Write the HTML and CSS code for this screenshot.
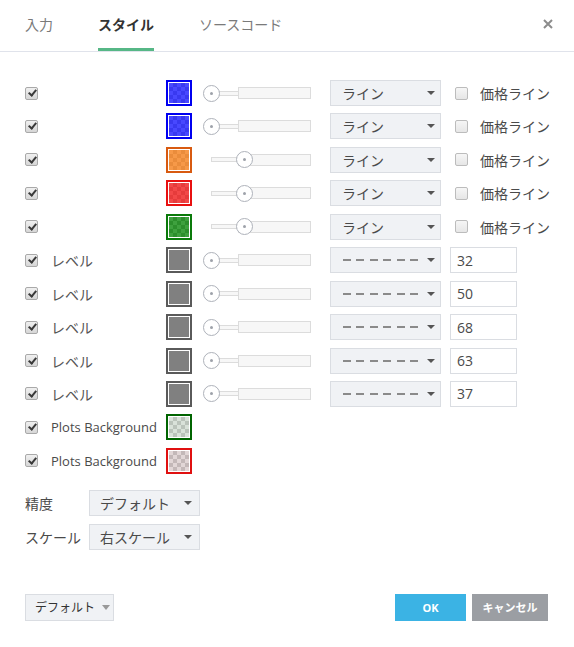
FILE: index.html
```html
<!DOCTYPE html>
<html lang="ja">
<head>
<meta charset="utf-8">
<link rel="stylesheet" href="styles.css">
</head>
<body>
<div class="dialog">
  <div class="header">
    <div class="tab">入力</div>
    <div class="tab active">スタイル</div>
    <div class="tab">ソースコード</div>
    <svg class="close" width="10" height="10" viewBox="0 0 10 10"><path d="M1 1L9 9M9 1L1 9" stroke="#8c8c8c" stroke-width="2"/></svg>
  </div>

  <div class="rows">
    <div class="row">
      <span class="cb on"></span><span class="label"></span>
      <span class="swatch sw-blue"><i></i></span>
      <span class="slider"><span class="thin"></span><span class="thick"></span><span class="thumb"></span></span>
      <span class="select"><span>ライン</span><b class="arrow"></b></span>
      <span class="cb off"></span><span class="plabel">価格ライン</span>
    </div>
    <div class="row">
      <span class="cb on"></span><span class="label"></span>
      <span class="swatch sw-blue"><i></i></span>
      <span class="slider"><span class="thin"></span><span class="thick"></span><span class="thumb"></span></span>
      <span class="select"><span>ライン</span><b class="arrow"></b></span>
      <span class="cb off"></span><span class="plabel">価格ライン</span>
    </div>
    <div class="row">
      <span class="cb on"></span><span class="label"></span>
      <span class="swatch sw-orange"><i></i></span>
      <span class="slider"><span class="thin"></span><span class="thick"></span><span class="thumb mid"></span></span>
      <span class="select"><span>ライン</span><b class="arrow"></b></span>
      <span class="cb off"></span><span class="plabel">価格ライン</span>
    </div>
    <div class="row">
      <span class="cb on"></span><span class="label"></span>
      <span class="swatch sw-red"><i></i></span>
      <span class="slider"><span class="thin"></span><span class="thick"></span><span class="thumb mid"></span></span>
      <span class="select"><span>ライン</span><b class="arrow"></b></span>
      <span class="cb off"></span><span class="plabel">価格ライン</span>
    </div>
    <div class="row">
      <span class="cb on"></span><span class="label"></span>
      <span class="swatch sw-green"><i></i></span>
      <span class="slider"><span class="thin"></span><span class="thick"></span><span class="thumb mid"></span></span>
      <span class="select"><span>ライン</span><b class="arrow"></b></span>
      <span class="cb off"></span><span class="plabel">価格ライン</span>
    </div>
    <div class="row">
      <span class="cb on"></span><span class="label jp">レベル</span>
      <span class="swatch sw-gray"><i></i></span>
      <span class="slider"><span class="thin"></span><span class="thick"></span><span class="thumb"></span></span>
      <span class="select"><span class="dashes"></span><b class="arrow"></b></span>
      <span class="num">32</span>
    </div>
    <div class="row">
      <span class="cb on"></span><span class="label jp">レベル</span>
      <span class="swatch sw-gray"><i></i></span>
      <span class="slider"><span class="thin"></span><span class="thick"></span><span class="thumb"></span></span>
      <span class="select"><span class="dashes"></span><b class="arrow"></b></span>
      <span class="num">50</span>
    </div>
    <div class="row">
      <span class="cb on"></span><span class="label jp">レベル</span>
      <span class="swatch sw-gray"><i></i></span>
      <span class="slider"><span class="thin"></span><span class="thick"></span><span class="thumb"></span></span>
      <span class="select"><span class="dashes"></span><b class="arrow"></b></span>
      <span class="num">68</span>
    </div>
    <div class="row">
      <span class="cb on"></span><span class="label jp">レベル</span>
      <span class="swatch sw-gray"><i></i></span>
      <span class="slider"><span class="thin"></span><span class="thick"></span><span class="thumb"></span></span>
      <span class="select"><span class="dashes"></span><b class="arrow"></b></span>
      <span class="num">63</span>
    </div>
    <div class="row">
      <span class="cb on"></span><span class="label jp">レベル</span>
      <span class="swatch sw-gray"><i></i></span>
      <span class="slider"><span class="thin"></span><span class="thick"></span><span class="thumb"></span></span>
      <span class="select"><span class="dashes"></span><b class="arrow"></b></span>
      <span class="num">37</span>
    </div>
    <div class="row">
      <span class="cb on"></span><span class="label">Plots Background</span>
      <span class="swatch sw-bggreen"><i></i></span>
    </div>
    <div class="row">
      <span class="cb on"></span><span class="label">Plots Background</span>
      <span class="swatch sw-bgred"><i></i></span>
    </div>
  </div>

  <div class="opts">
    <div class="opt">
      <span class="olabel">精度</span>
      <span class="select small"><span>デフォルト</span><b class="arrow"></b></span>
    </div>
    <div class="opt">
      <span class="olabel">スケール</span>
      <span class="select small"><span>右スケール</span><b class="arrow"></b></span>
    </div>
  </div>

  <div class="footer">
    <span class="btn-def">デフォルト<b class="arrow light"></b></span>
    <span class="spacer"></span>
    <span class="btn ok">OK</span>
    <span class="btn cancel">キャンセル</span>
  </div>
</div>
</body>
</html>
```

FILE: styles.css
```css
* { box-sizing: border-box; }
html, body { margin: 0; padding: 0; background: #fff; }
body {
  font-family: "Open Sans", "Noto Sans CJK JP", sans-serif;
  color: #4a4a4a;
  width: 574px;
  height: 647px;
  overflow: hidden;
}
.dialog { width: 574px; }

.header {
  display: flex;
  align-items: stretch;
  height: 52px;
  border-bottom: 1px solid #e0e3eb;
  padding-left: 25px;
}
.tab {
  display: flex;
  align-items: center;
  font-size: 14px;
  color: #7a7a7a;
  margin-right: 45px;
  border-bottom: 3px solid transparent;
}
.tab.active {
  color: #333;
  font-weight: bold;
  border-bottom-color: #56b786;
}
.close {
  margin-left: auto;
  margin-right: 21px;
  align-self: center;
  margin-top: -4px;
}

.rows {
  padding: 28px 0 0 25px;
  display: flex;
  flex-direction: column;
  gap: 7.45px;
}
.row {
  display: flex;
  align-items: center;
  height: 26px;
}
.cb {
  width: 13px;
  height: 13px;
  border-radius: 2px;
  flex: none;
  position: relative;
}
.cb.on {
  border: 1px solid #a9a9a9;
  background: linear-gradient(#f0f0f0, #d6d6d6);
}
.cb.on::after {
  content: "";
  position: absolute;
  left: 3.5px;
  top: 0.5px;
  width: 3px;
  height: 6px;
  border: solid #3a3a3a;
  border-width: 0 2.5px 2.5px 0;
  transform: rotate(40deg);
}
.cb.off {
  border: 1px solid #bcbcbc;
  background: linear-gradient(#f6f6f6, #e6e6e6);
  margin-left: 14px;
}
.label {
  width: 115px;
  margin-left: 13px;
  font-size: 13px;
  color: #4a4a4a;
  white-space: nowrap;
}
.label.jp { font-size: 14px; color: #555; }
.plabel {
  margin-left: 12px;
  font-size: 14px;
  color: #4a4a4a;
}

.swatch {
  width: 26px;
  height: 26px;
  border: 2px solid;
  padding: 1px;
  background: #fff;
  flex: none;
  display: flex;
}
.swatch i {
  flex: 1;
  display: block;
  background-color: #fff;
}
.sw-blue { border-color: #0000f0; }
.sw-blue i { background: linear-gradient(rgba(40,40,255,.85), rgba(40,40,255,.85)), conic-gradient(#999 25%, #fff 0 50%, #999 0 75%, #fff 0) 0 0/8px 8px; }
.sw-orange { border-color: #d85a10; }
.sw-orange i { background: linear-gradient(rgba(245,135,40,.85), rgba(245,135,40,.85)), conic-gradient(#aaa 25%, #fff 0 50%, #aaa 0 75%, #fff 0) 0 0/8px 8px; }
.sw-red { border-color: #e81010; }
.sw-red i { background: linear-gradient(rgba(240,40,40,.85), rgba(240,40,40,.85)), conic-gradient(#aaa 25%, #fff 0 50%, #aaa 0 75%, #fff 0) 0 0/8px 8px; }
.sw-green { border-color: #0a7a0a; }
.sw-green i { background: linear-gradient(rgba(20,140,20,.82), rgba(20,140,20,.82)), conic-gradient(#999 25%, #fff 0 50%, #999 0 75%, #fff 0) 0 0/8px 8px; }
.sw-gray { border-color: #5a5a5a; }
.sw-gray i { background: #808080; }
.sw-bggreen { border-color: #006400; }
.sw-bggreen i { background: linear-gradient(rgba(120,160,120,.22), rgba(120,160,120,.22)), conic-gradient(#cdcdcd 25%, #f4f4f4 0 50%, #cdcdcd 0 75%, #f4f4f4 0) 0 0/8px 8px; }
.sw-bgred { border-color: #e01010; }
.sw-bgred i { background: linear-gradient(rgba(160,110,110,.22), rgba(160,110,110,.22)), conic-gradient(#cdcdcd 25%, #f4f4f4 0 50%, #cdcdcd 0 75%, #f4f4f4 0) 0 0/8px 8px; }

.slider {
  position: relative;
  width: 108px;
  height: 26px;
  margin-left: 11px;
  display: flex;
  align-items: center;
  padding-left: 8px;
  flex: none;
}
.thin {
  width: 27px;
  height: 5px;
  border: 1px solid #dcdcdc;
  border-right: none;
  background: #f7f7f7;
}
.thick {
  width: 73px;
  height: 12px;
  border: 1px solid #dcdcdc;
  background: #f7f7f7;
}
.thumb {
  position: absolute;
  left: 0;
  top: 4.5px;
  width: 17px;
  height: 17px;
  border-radius: 50%;
  border: 1px solid #aeb2ba;
  background: #fff;
}
.thumb::after {
  content: "";
  position: absolute;
  left: 6px;
  top: 6px;
  width: 3px;
  height: 3px;
  border-radius: 50%;
  background: #9ea2aa;
}
.thumb.mid { left: 33px; }

.select {
  width: 111px;
  height: 26px;
  margin-left: 19px;
  background: #f0f2f5;
  border: 1px solid #dadde2;
  display: flex;
  align-items: center;
  padding: 0 5px 0 11px;
  font-size: 14px;
  color: #4a4a4a;
  flex: none;
}
.select > span { flex: 1; }
.arrow {
  display: block;
  width: 0;
  height: 0;
  border-left: 4px solid transparent;
  border-right: 4px solid transparent;
  border-top: 4px solid #555;
}
.arrow.light { border-top-color: #999; border-left-width: 4px; border-right-width: 4px; border-top-width: 5px; margin-left: 7px; }
.select > .dashes {
  flex: none;
  display: block;
  height: 2px;
  width: 75px;
  margin-left: 1px;
  margin-right: auto;
  background: repeating-linear-gradient(to right, #8a8a8a 0 8px, transparent 8px 13.4px);
}
.num {
  width: 67px;
  height: 26px;
  margin-left: 9px;
  border: 1px solid #dadde2;
  display: flex;
  align-items: center;
  padding-left: 6px;
  font-size: 14px;
  color: #4a4a4a;
}

.opts {
  padding: 16px 0 0 25px;
  display: flex;
  flex-direction: column;
  gap: 8px;
}
.opt {
  display: flex;
  align-items: center;
  height: 26px;
}
.olabel {
  width: 64px;
  font-size: 14px;
  color: #4a4a4a;
}
.select.small { margin-left: 0; padding-left: 10px; padding-right: 7px; }

.footer {
  display: flex;
  align-items: center;
  padding: 44px 26px 0 25px;
}
.btn-def {
  width: 89px;
  height: 27px;
  background: #f0f2f5;
  border: 1px solid #dadde2;
  display: flex;
  align-items: center;
  padding-left: 9px;
  font-size: 12px;
  color: #333;
}
.spacer { flex: 1; }
.btn {
  height: 27px;
  display: flex;
  align-items: center;
  justify-content: center;
  color: #fff;
  font-weight: bold;
  font-size: 11px;
}
.ok { width: 71px; background: #3bb3e4; margin-right: 6px; }
.cancel { width: 76px; background: #9b9ea3; }
```
